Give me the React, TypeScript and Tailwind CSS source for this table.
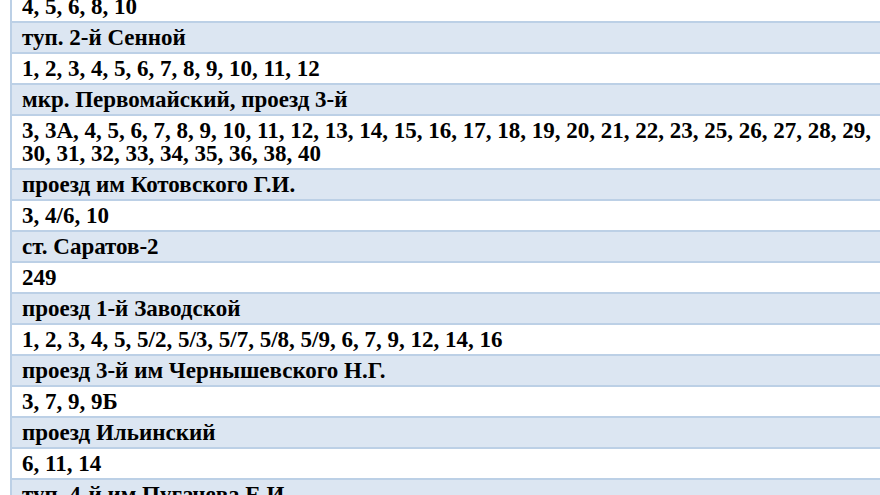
import React from "react";

const rows: { text: string; head: boolean }[] = [
  { text: "4, 5, 6, 8, 10", head: false },
  { text: "туп. 2-й Сенной", head: true },
  { text: "1, 2, 3, 4, 5, 6, 7, 8, 9, 10, 11, 12", head: false },
  { text: "мкр. Первомайский, проезд 3-й", head: true },
  {
    text: "3, 3А, 4, 5, 6, 7, 8, 9, 10, 11, 12, 13, 14, 15, 16, 17, 18, 19, 20, 21, 22, 23, 25, 26, 27, 28, 29, 30, 31, 32, 33, 34, 35, 36, 38, 40",
    head: false,
  },
  { text: "проезд им Котовского Г.И.", head: true },
  { text: "3, 4/6, 10", head: false },
  { text: "ст. Саратов-2", head: true },
  { text: "249", head: false },
  { text: "проезд 1-й Заводской", head: true },
  { text: "1, 2, 3, 4, 5, 5/2, 5/3, 5/7, 5/8, 5/9, 6, 7, 9, 12, 14, 16", head: false },
  { text: "проезд 3-й им Чернышевского Н.Г.", head: true },
  { text: "3, 7, 9, 9Б", head: false },
  { text: "проезд Ильинский", head: true },
  { text: "6, 11, 14", head: false },
  { text: "туп. 4-й им Пугачева Е.И.", head: true },
];

export default function App() {
  return (
    <div className="w-[880px] h-[495px] overflow-hidden bg-white">
      <div
        className="-mt-[8px] ml-[10px] w-[900px] border-l-2 border-[#bcd0e6]"
        style={{ fontFamily: '"Liberation Serif", "Times New Roman", serif' }}
      >
        {rows.map((r, i) => (
          <div
            key={i}
            className={
              r.head
                ? "bg-[#dce6f2] border-b-2 border-[#bcd0e6] pl-[10px] pr-[30px] pt-[3px] pb-[3px] text-[23px] leading-[23px] font-bold text-black"
                : "bg-white border-b-2 border-[#bcd0e6] pl-[10px] pr-[30px] pt-[3px] pb-[3px] text-[23px] leading-[23px] font-bold text-black"
            }
          >
            {r.text}
          </div>
        ))}
      </div>
    </div>
  );
}
